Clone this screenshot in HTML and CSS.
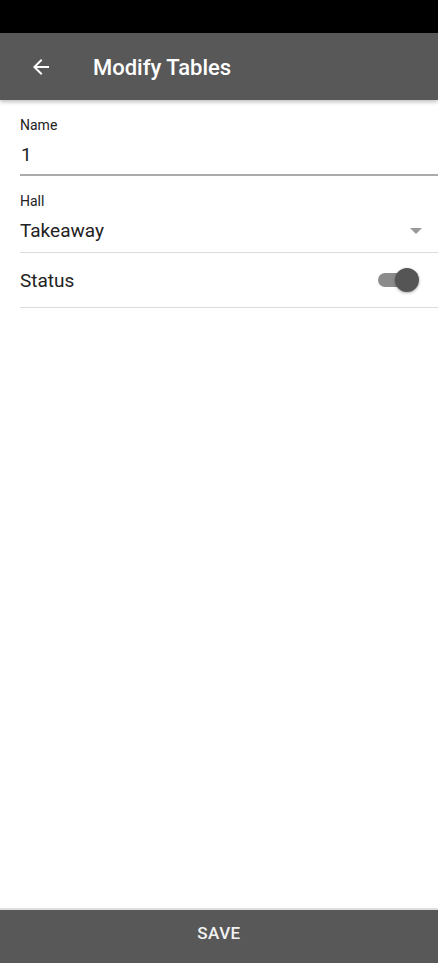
FILE: index.html
```html
<!DOCTYPE html>
<html>
<head>
    <title>Modify Tables</title>
    <link rel="stylesheet" href="styles.css">
</head>
<body>
    <div class="screen">
        <div class="status-bar"></div>
        <div class="app-bar">
            <button class="back-btn" aria-label="Back">
                <svg width="24" height="24" viewBox="0 0 24 24"><path d="M20 11H7.83l5.59-5.59L12 4l-8 8 8 8 1.41-1.41L7.83 13H20v-2z" fill="#fff"/></svg>
            </button>
            <h1>Modify Tables</h1>
        </div>
        <form class="form">
            <div class="field field-input">
                <label for="name">Name</label>
                <input type="text" id="name" value="1">
            </div>
            <div class="field field-select">
                <label for="hall">Hall</label>
                <div class="select-row">
                    <span id="hall">Takeaway</span>
                    <span class="caret"></span>
                </div>
            </div>
            <div class="field field-switch">
                <span>Status</span>
                <span class="switch"><span class="thumb"></span></span>
            </div>
        </form>
        <button class="save-btn" type="button">SAVE</button>
    </div>
</body>
</html>
```

FILE: styles.css
```css
body {
    margin: 0;
    font-family: Roboto, 'Noto Sans', sans-serif;
    background-color: #fff;
}
.screen {
    display: flex;
    flex-direction: column;
    height: 963px;
}
.status-bar {
    height: 33px;
    background-color: #000;
}
.app-bar {
    height: 67px;
    background-color: #585858;
    display: flex;
    align-items: center;
    box-shadow: 0 2px 4px rgba(0, 0, 0, 0.25);
    position: relative;
}
.back-btn {
    background: none;
    border: none;
    padding: 0;
    margin-left: 29px;
    width: 24px;
    height: 24px;
    display: flex;
}
.app-bar h1 {
    margin: 2px 0 0 40px;
    color: #fff;
    font-size: 22px;
    font-weight: 500;
}
.form {
    flex: 1;
    padding-left: 20px;
}
.field label {
    display: block;
    font-size: 14px;
    color: #222;
}
.field-input {
    padding-top: 17px;
}
.field-input input {
    display: block;
    width: 100%;
    box-sizing: border-box;
    border: none;
    border-bottom: 2px solid #ababab;
    padding: 10px 0 8px 1px;
    font-family: inherit;
    font-size: 19px;
    color: #222;
    outline: none;
}
.field-select {
    padding-top: 17px;
    border-bottom: 1px solid #dcdcdc;
}
.select-row {
    display: flex;
    align-items: center;
    justify-content: space-between;
    font-size: 19px;
    color: #222;
    padding: 10px 0 10px;
}
.caret {
    width: 0;
    height: 0;
    border-left: 6px solid transparent;
    border-right: 6px solid transparent;
    border-top: 6px solid #9a9a9a;
    margin-right: 16px;
}
.field-switch {
    display: flex;
    align-items: center;
    justify-content: space-between;
    height: 54px;
    font-size: 19px;
    color: #222;
    border-bottom: 1px solid #dcdcdc;
}
.switch {
    position: relative;
    width: 34px;
    height: 14px;
    border-radius: 7px;
    background-color: #8c8c8c;
    margin-right: 26px;
}
.thumb {
    position: absolute;
    right: -7px;
    top: -5px;
    width: 24px;
    height: 24px;
    border-radius: 50%;
    background-color: #555;
    box-shadow: 0 1px 3px rgba(0, 0, 0, 0.35);
}
.save-btn {
    height: 55px;
    border: none;
    border-top: 2px solid #dedede;
    padding: 0 0 8px;
    background-color: #585858;
    color: #f2f2f2;
    font-family: inherit;
    font-size: 17px;
    font-weight: 500;
    letter-spacing: 0.5px;
}
```
